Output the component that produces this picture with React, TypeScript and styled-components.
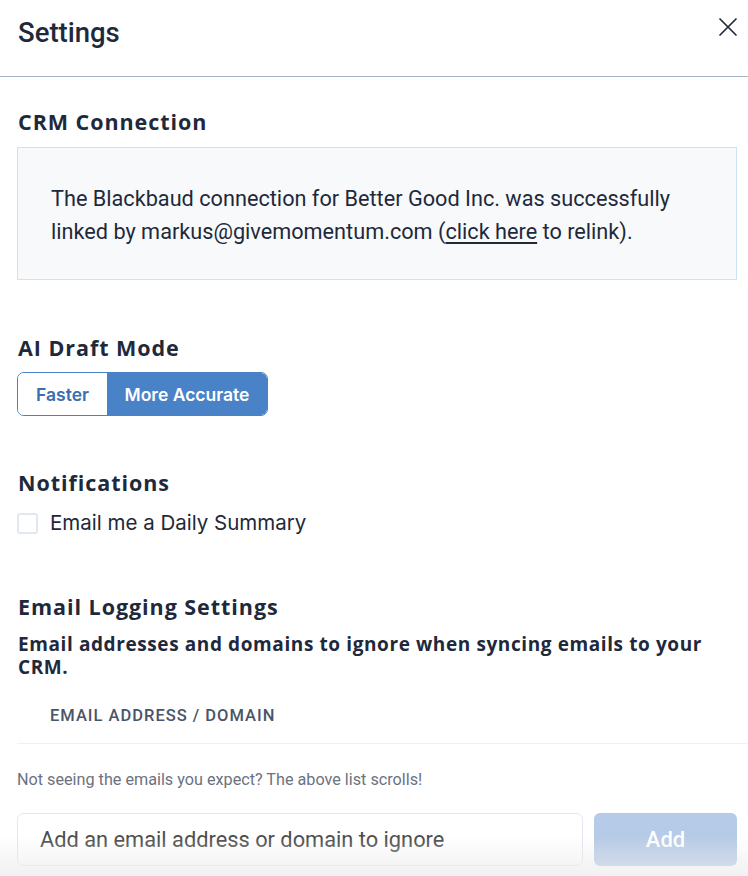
import React, { useState } from "react";
import styled, { createGlobalStyle } from "styled-components";

const GlobalStyle = createGlobalStyle`
  html, body { margin: 0; padding: 0; background: #ffffff; }
  body { font-family: Roboto, "Liberation Sans", sans-serif; color: #1e293b; }
  * { box-sizing: border-box; }
`;

const Panel = styled.div`
  width: 748px;
  min-height: 876px;
  position: relative;
  overflow: hidden;
`;

const BottomFade = styled.div`
  position: fixed;
  left: 0;
  right: 0;
  bottom: 0;
  height: 40px;
  pointer-events: none;
  background: linear-gradient(to bottom, rgba(235, 235, 235, 0), rgba(235, 235, 235, 0.7));
`;

const Header = styled.header`
  height: 77px;
  display: flex;
  align-items: flex-start;
  justify-content: space-between;
  padding: 16px 8px 0 18px;
  border-bottom: 1px solid #a3b5cb;
`;

const Title = styled.h1`
  margin: 0;
  font-family: Roboto, "Liberation Sans", sans-serif;
  font-weight: 500;
  font-size: 27.5px;
  line-height: 34px;
  color: #1e293b;
`;

const CloseButton = styled.button`
  border: 0;
  background: none;
  padding: 0;
  width: 24px;
  height: 24px;
  margin-top: -1px;
  display: flex;
  align-items: center;
  justify-content: center;
  cursor: pointer;
`;

const Body = styled.div`
  padding: 0 11px 0 17px;
  display: flex;
  flex-direction: column;
`;

const SectionTitle = styled.h2<{ $top: number }>`
  margin: ${(p) => p.$top}px 0 0 1px;
  font-family: "Open Sans", "Liberation Sans", sans-serif;
  font-weight: 700;
  font-size: 21.5px;
  letter-spacing: 0.95px;
  line-height: 28px;
  color: #1e293b;
`;

const InfoBox = styled.div`
  margin-top: 11px;
  background: #f8f9fb;
  border: 1px solid #cfe2f3;
  padding: 34px 20px 31px 33px;
  font-family: Roboto, "Liberation Sans", sans-serif;
  font-size: 21.7px;
  line-height: 33px;
  color: #1e293b;
`;

const Link = styled.a`
  color: #1e293b;
  text-decoration: underline;
  text-underline-offset: 3px;
  cursor: pointer;
`;

const Toggle = styled.div`
  margin-top: 10px;
  display: inline-flex;
  align-self: flex-start;
  border: 1px solid #4a82c8;
  border-radius: 7px;
  overflow: hidden;
  height: 44px;
`;

const ToggleOption = styled.button<{ $active: boolean; $w: number }>`
  width: ${(p) => p.$w}px;
  border: 0;
  margin: 0;
  padding: 0;
  font-family: Inter, "Liberation Sans", sans-serif;
  font-weight: 600;
  font-size: 17.5px;
  background: ${(p) => (p.$active ? "#4a82c8" : "#ffffff")};
  color: ${(p) => (p.$active ? "#ffffff" : "#3b6db0")};
  cursor: pointer;
`;

const CheckRow = styled.label`
  margin-top: 12px;
  display: flex;
  align-items: center;
  gap: 12px;
  font-family: Inter, "Liberation Sans", sans-serif;
  font-size: 20.5px;
  line-height: 28px;
  color: #1e293b;
  cursor: pointer;
`;

const Box = styled.span`
  width: 21px;
  height: 21px;
  border: 2px solid #e2e8f0;
  border-radius: 3px;
  background: #fff;
`;

const SubTitle = styled.p`
  margin: 12px 0 0 1px;
  font-family: "Open Sans", "Liberation Sans", sans-serif;
  font-weight: 700;
  font-size: 19px;
  letter-spacing: 0.6px;
  line-height: 23px;
  color: #1e293b;
`;

const TableHead = styled.div`
  margin-top: 27px;
  padding: 0 0 17px 33px;
  border-bottom: 1px solid #edf0f4;
  margin-right: -11px;
  font-family: Roboto, "Liberation Sans", sans-serif;
  font-weight: 500;
  font-size: 16.5px;
  line-height: 20px;
  letter-spacing: 1px;
  color: #4a5568;
  text-transform: uppercase;
`;

const Hint = styled.p`
  margin: 26px 0 0 0;
  font-family: Roboto, "Liberation Sans", sans-serif;
  font-size: 16.2px;
  line-height: 20px;
  color: #6b7280;
`;

const AddRow = styled.div`
  margin-top: 23px;
  display: flex;
  gap: 11px;
`;

const Input = styled.input`
  flex: 1;
  height: 53px;
  border: 1px solid #e2e8f0;
  border-radius: 6px;
  padding: 0 22px;
  font-family: Roboto, "Liberation Sans", sans-serif;
  font-size: 21.8px;
  color: #1e293b;
  background: #fff;
  &::placeholder { color: #4b4b4b; }
  &:focus { outline: none; }
`;

const AddButton = styled.button`
  width: 143px;
  height: 53px;
  border: 0;
  border-radius: 6px;
  background: #b6cbe7;
  color: #ffffff;
  font-family: Roboto, "Liberation Sans", sans-serif;
  font-weight: 500;
  font-size: 22px;
`;

export default function App() {
  const [mode, setMode] = useState<"fast" | "accurate">("accurate");
  const [daily, setDaily] = useState(false);
  return (
    <Panel>
      <GlobalStyle />
      <Header>
        <Title>Settings</Title>
        <CloseButton aria-label="Close">
          <svg width="20" height="20" viewBox="0 0 20 20" fill="none" stroke="#1e293b" strokeWidth="1.7" strokeLinecap="round">
            <path d="M2 2 L18 18 M18 2 L2 18" />
          </svg>
        </CloseButton>
      </Header>
      <Body>
        <SectionTitle $top={31}>CRM Connection</SectionTitle>
        <InfoBox>
          The Blackbaud connection for Better Good Inc. was successfully linked by
          markus@givemomentum.com (<Link>click here</Link> to relink).
        </InfoBox>
        <SectionTitle $top={54}>AI Draft Mode</SectionTitle>
        <Toggle>
          <ToggleOption $w={89} $active={mode === "fast"} onClick={() => setMode("fast")}>
            Faster
          </ToggleOption>
          <ToggleOption $w={160} $active={mode === "accurate"} onClick={() => setMode("accurate")}>
            More Accurate
          </ToggleOption>
        </Toggle>
        <SectionTitle $top={53}>Notifications</SectionTitle>
        <CheckRow onClick={() => setDaily(!daily)}>
          <Box />
          Email me a Daily Summary
        </CheckRow>
        <SectionTitle $top={56}>Email Logging Settings</SectionTitle>
        <SubTitle>Email addresses and domains to ignore when syncing emails to your CRM.</SubTitle>
        <TableHead>Email Address / Domain</TableHead>
        <Hint>Not seeing the emails you expect? The above list scrolls!</Hint>
        <AddRow>
          <Input placeholder="Add an email address or domain to ignore" />
          <AddButton>Add</AddButton>
        </AddRow>
      </Body>
      <BottomFade />
    </Panel>
  );
}
